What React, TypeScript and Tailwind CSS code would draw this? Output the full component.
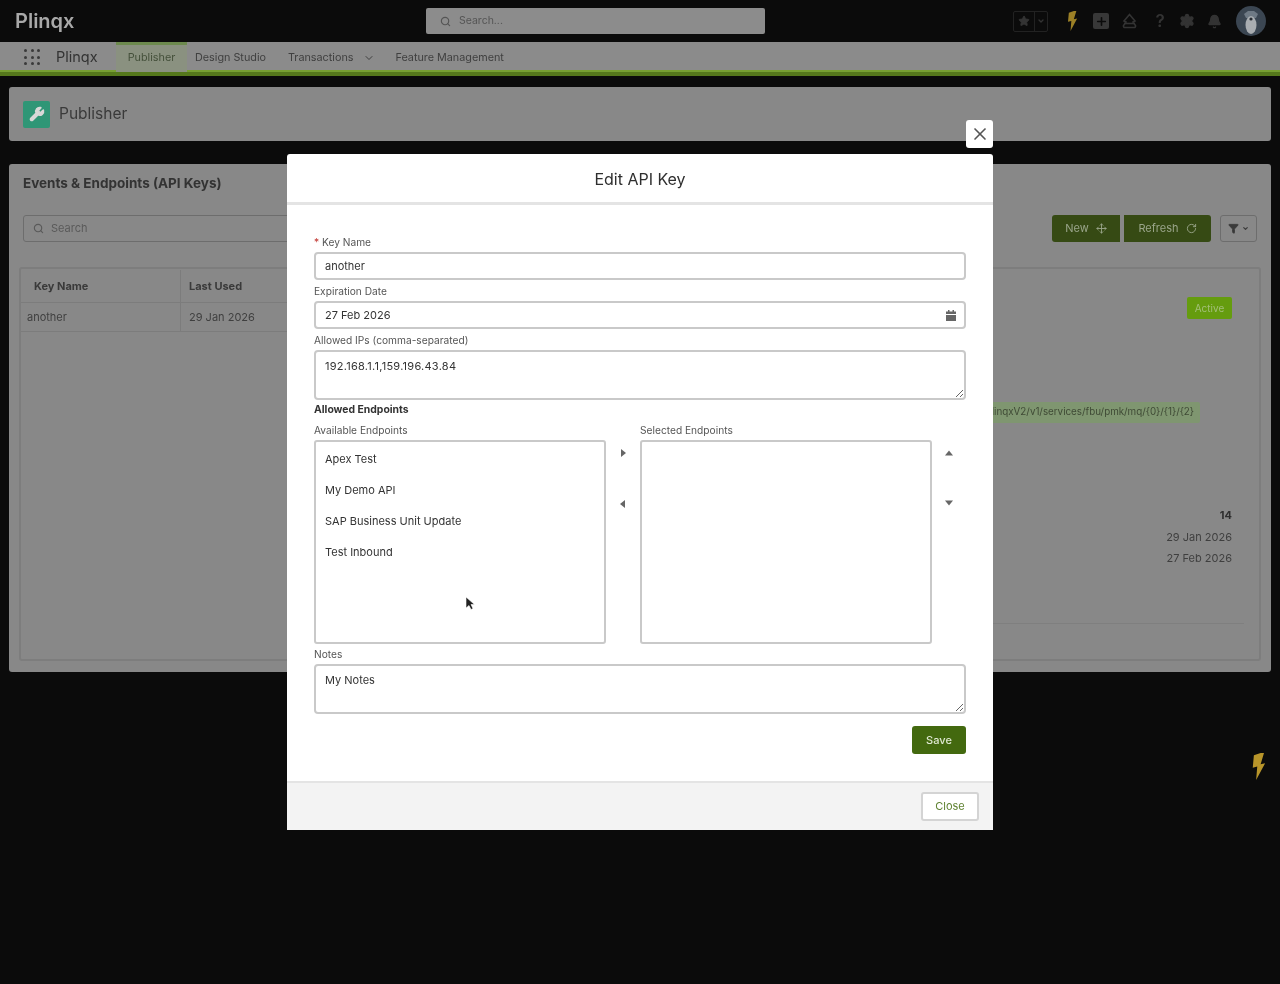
import React from "react";
import { Star, Plus, Settings, Bell, Wrench, Search, ChevronDown, RotateCw, X, Filter, Move } from "lucide-react";

const inputCls = "block w-full h-[28px] rounded-[4px] border-2 border-[#c9c9c9] bg-white px-[9px] text-[11px] text-[#333] outline-none";
const areaCls = "block w-full rounded-[4px] border-2 border-[#c9c9c9] bg-white px-[9px] py-[6px] text-[11px] leading-[16px] text-[#333] outline-none resize-y";
const labelCls = "block h-[16px] text-[10.2px] leading-[13px] text-[#555]";

function Field({ label, children, star }: { label: string; children: React.ReactNode; star?: boolean }) {
  return (
    <div>
      <div className={labelCls}>
        {star && <span className="text-[#c23934]">* </span>}
        {label}
      </div>
      {children}
    </div>
  );
}

function Tri({ d }: { d: string }) {
  return (
    <svg width="10" height="10" viewBox="0 0 10 10" className="text-[#666]" fill="currentColor">
      <path d={d} />
    </svg>
  );
}

function Bolt({ w, h, cls, color }: { w: number; h: number; cls: string; color: string }) {
  return (
    <svg width={w} height={h} viewBox="0 0 12 24" className={cls} fill={color}>
      <path d="M7 0 1 2 0 13l4-1-1 12 8-15-4 1 3-10z" />
    </svg>
  );
}

function ListBox({ items }: { items: string[] }) {
  return (
    <div className="h-[204px] w-[292px] rounded-[3px] border-2 border-[#c9c9c9] bg-white pl-[9px] pt-[2px] text-[11px] text-[#333]">
      {items.map((t) => (
        <div key={t} className="flex h-[30.8px] items-center">{t}</div>
      ))}
    </div>
  );
}

export default function App() {
  return (
    <div className="relative h-[984px] w-[1280px] overflow-hidden bg-[#0b0b0b] font-['Inter','Liberation_Sans',sans-serif] blur-[0.6px]">
      {/* top bar */}
      <header className="relative flex h-[42px] items-center pl-[15px] pr-[14px]">
        <span className="text-[20px] font-semibold text-[#a8a8a8]">Plinqx</span>
        <div className="absolute left-[426px] top-[8px] flex h-[26px] w-[339px] items-center gap-[8px] rounded-[2px] bg-[#8c8c8c] pl-[14px] text-[10.5px] text-[#555]">
          <Search size={11} strokeWidth={2.5} />
          Search...
        </div>
        <div className="ml-auto flex items-center text-[#333]">
          <div className="mr-[19px] flex h-[21px] w-[35px] items-center rounded-[2px] border border-[#222]">
            <span className="flex h-full w-[21px] items-center justify-center border-r border-[#222]">
              <Star size={12} fill="currentColor" />
            </span>
            <ChevronDown size={8} strokeWidth={4} className="ml-[2px]" />
          </div>
          <Bolt w={12} h={20} cls="mr-[14px]" color="#9c8026" />
          <span className="mr-[12px] flex h-[16px] w-[16px] items-center justify-center rounded-[2px] bg-[#383838] text-[#0b0b0b]">
            <Plus size={13} strokeWidth={3} />
          </span>
          <svg width="17" height="17" viewBox="0 0 17 17" fill="none" stroke="currentColor" strokeWidth="1.6" className="mr-[17px]">
            <path d="M8.5 1.5 14 8l-2 1 2.5 3.5a1.5 1.5 0 0 1-1.5 2H4a1.5 1.5 0 0 1-1.5-2L5 9 3 8z" />
            <path d="M3 10.5h11" />
          </svg>
          <span className="mr-[14px] w-[10px] text-center text-[17px] font-semibold leading-none">?</span>
          <Settings size={16} fill="currentColor" stroke="#333" className="mr-[12px]" />
          <Bell size={15} fill="currentColor" className="mr-[14px]" />
          <svg width="30" height="30" viewBox="0 0 30 30">
            <circle cx="15" cy="15" r="15" fill="#3b4652" />
            <path d="M8 8l4-3h6l4 3-2 4H10z" fill="#6f7a85" />
            <ellipse cx="15" cy="19" rx="5.5" ry="9" fill="#a9adb1" />
            <circle cx="15" cy="13" r="1.6" fill="#2a2f35" />
          </svg>
        </div>
      </header>

      {/* nav */}
      <nav className="flex h-[34px] items-stretch border-b-[4px] border-b-[#55781c] bg-[#8b8b8b] text-[10.8px] text-[#3f3f3f] shadow-[inset_0_-2px_0_#779f32]">
        <div className="ml-[24px] mt-[7px] grid h-[17px] w-[17px] grid-cols-3 gap-[3px]">
          {Array.from({ length: 9 }).map((_, i) => (
            <span key={i} className="h-[3px] w-[3px] rounded-full bg-[#3a3a3a]" />
          ))}
        </div>
        <span className="ml-[15px] flex w-[60px] items-center text-[14.5px] text-[#333]">Plinqx</span>
        <span className="flex w-[71px] items-center justify-center border-t-[3px] border-[#6d8a4e] bg-[#8a9180] text-[#44503a]">Publisher</span>
        <span className="ml-[8px] flex items-center pt-[2px]">Design Studio</span>
        <span className="ml-[22px] flex items-center pt-[2px]">Transactions</span>
        <span className="ml-[10px] flex items-center pt-[2px]"><ChevronDown size={12} /></span>
        <span className="ml-[20px] flex items-center pt-[2px]">Feature Management</span>
      </nav>

      {/* publisher card */}
      <section className="mx-[9px] mt-[11px] flex h-[54px] items-center rounded-[3px] bg-[#888888] pl-[14px]">
        <span className="flex h-[27px] w-[27px] items-center justify-center rounded-[2px] bg-[#2f9676]">
          <Wrench size={16} className="text-[#d8d8d8]" fill="#d8d8d8" />
        </span>
        <span className="ml-[9px] pb-[1px] text-[15.5px] text-[#3a3a3a]">Publisher</span>
      </section>

      {/* list card */}
      <section className="mx-[9px] mt-[23px] h-[508px] rounded-[3px] bg-[#888888] px-[10px] pt-[11px]">
        <h2 className="ml-[4px] text-[13.5px] font-bold leading-[16px] text-[#333]">Events &amp; Endpoints (API Keys)</h2>
        <div className="ml-[4px] mt-[24px] flex h-[27px] items-center">
          <div className="flex h-[27px] w-[300px] items-center gap-[7px] rounded-[3px] border border-[#6d6d6d] pl-[9px] text-[11px] text-[#5a5a5a]">
            <Search size={11} strokeWidth={2.5} />
            Search
          </div>
          <div className="ml-auto flex items-center">
            <button className="flex h-[27px] w-[68px] items-center justify-center gap-[7px] rounded-l-[3px] bg-[#364a14] text-[11px] text-[#9aa58a]">
              New <Move size={11} />
            </button>
            <button className="ml-[4px] flex h-[27px] w-[87px] items-center justify-center gap-[7px] rounded-r-[3px] bg-[#364a14] text-[11px] text-[#9aa58a]">
              Refresh <RotateCw size={11} />
            </button>
            <button className="ml-[9px] mr-[4px] flex h-[27px] w-[37px] items-center justify-center gap-[3px] rounded-[3px] border border-[#6d6d6d] text-[#3a3a3a]">
              <Filter size={11} fill="currentColor" />
              <ChevronDown size={7} strokeWidth={4} />
            </button>
          </div>
        </div>
        <div className="mt-[25px] flex h-[394px] rounded-[3px] border-2 border-[#7d7d7d]">
          <div className="w-[270px]">
            <div className="flex h-[34px] items-center border-b border-[#7c7c7c] pt-[1px] text-[11px] font-bold text-[#3a3a3a]">
              <span className="w-[160px] border-r border-[#7c7c7c] pl-[13px] leading-[33px]">Key Name</span>
              <span className="pl-[8px]">Last Used</span>
            </div>
            <div className="flex h-[29px] items-center border-b border-[#7c7c7c] text-[11px] text-[#3f3f3f]">
              <span className="w-[160px] border-r border-[#7c7c7c] pl-[6px] leading-[28px]">another</span>
              <span className="pl-[8px]">29 Jan 2026</span>
            </div>
          </div>
          <div className="flex flex-1 flex-col items-end pr-[27px] text-[11px] text-[#3f3f3f]">
            <span className="mt-[28px] flex h-[22px] w-[45px] items-center justify-center rounded-[2px] bg-[#659c0e] text-[10px] text-[#a3bf78]">Active</span>
            <span className="mr-[32px] mt-[83px] flex h-[21px] items-center rounded-[2px] bg-[#7f9670] pl-[8px] pr-[6px] text-[9.8px] text-[#3f4a35]">/services/apexrest/plinqxV2/v1/services/fbu/pmk/mq/{"{0}/{1}/{2}"}</span>
            <span className="mt-[84px] font-bold leading-[16px] text-[#2f2f2f]">14</span>
            <span className="mt-[6px] leading-[16px]">29 Jan 2026</span>
            <span className="mt-[5px] leading-[16px]">27 Feb 2026</span>
            <div className="-mr-[12px] mt-[57px] w-[500px] border-t border-[#7f7f7f]" />
          </div>
        </div>
      </section>

      {/* floating bolt */}
      <Bolt w={15} h={27} cls="absolute left-[1252px] top-[753px]" color="#b8952a" />

      {/* modal */}
      <button className="absolute left-[966px] top-[120px] flex h-[28px] w-[27px] items-center justify-center rounded-[3px] bg-white text-[#555]">
        <X size={20} strokeWidth={2} />
      </button>
      <div className="absolute left-[287px] top-[154px] flex h-[676px] w-[706px] flex-col rounded-[3px] bg-white">
        <div className="flex h-[51px] items-center justify-center border-b-[3px] border-[#e4e4e4] pt-[1px] text-[16px] text-[#2f2f2f]">
          Edit API Key
        </div>
        <div className="flex-1 px-[27px] pt-[31px]">
          <Field label="Key Name" star>
            <input readOnly value="another" className={inputCls} />
          </Field>
          <div className="mt-[5px]">
            <Field label="Expiration Date">
              <div className="relative">
                <input readOnly value="27 Feb 2026" className={inputCls} />
                <svg width="10" height="11" viewBox="0 0 10 11" fill="#666" className="absolute right-[10px] top-[9px]">
                  <path d="M0 1.5h2V0h1.5v1.5h3V0H8v1.5h2V4H0zM0 5h10v6H0z" />
                </svg>
              </div>
            </Field>
          </div>
          <div className="mt-[5px]">
            <Field label="Allowed IPs (comma-separated)">
              <textarea readOnly value="192.168.1.1,159.196.43.84" className={`${areaCls} h-[50px] tracking-[0.25px]`} />
            </Field>
          </div>
          <div className="mt-[4px] h-[11px] text-[10.4px] font-bold leading-[12px] text-[#333]">Allowed Endpoints</div>
          <div className="mt-[9px] flex">
            <div>
              <div className={labelCls}>Available Endpoints</div>
              <ListBox items={["Apex Test", "My Demo API", "SAP Business Unit Update", "Test Inbound"]} />
            </div>
            <div className="flex w-[34px] flex-col items-center pt-[24px]">
              <Tri d="M3 1l5 4-5 4z" />
              <div className="mt-[41px]"><Tri d="M7 1 2 5l5 4z" /></div>
            </div>
            <div>
              <div className={labelCls}>Selected Endpoints</div>
              <ListBox items={[]} />
            </div>
            <div className="flex w-[34px] flex-col items-center pt-[24px]">
              <Tri d="M1 7.5l4-5 4 5z" />
              <div className="mt-[40px]"><Tri d="M1 2.5l4 5 4-5z" /></div>
            </div>
          </div>
          <div className="mt-[4px]">
            <Field label="Notes">
              <textarea readOnly value="My Notes" className={`${areaCls} h-[50px]`} />
            </Field>
          </div>
          <div className="mt-[12px] flex justify-end">
            <button className="h-[28px] w-[54px] rounded-[3px] bg-[#43690f] text-[11px] font-medium text-[#dfe8d2]">Save</button>
          </div>
        </div>
        <div className="flex h-[49px] items-center justify-end border-t-2 border-[#e4e4e4] bg-[#f3f3f3] pr-[14px]">
          <button className="h-[29px] w-[58px] rounded-[3px] border-2 border-[#d4d4d4] bg-white text-[11px] text-[#5f8231]">Close</button>
        </div>
      </div>

      {/* mouse pointer */}
      <svg width="10" height="15" viewBox="0 0 10 15" className="absolute left-[465px] top-[596px]">
        <path d="M1 1v11l3-2.5 2 4 2-1-2-4h3.5z" fill="#222" stroke="#fff" strokeWidth="0.6" />
      </svg>
    </div>
  );
}
